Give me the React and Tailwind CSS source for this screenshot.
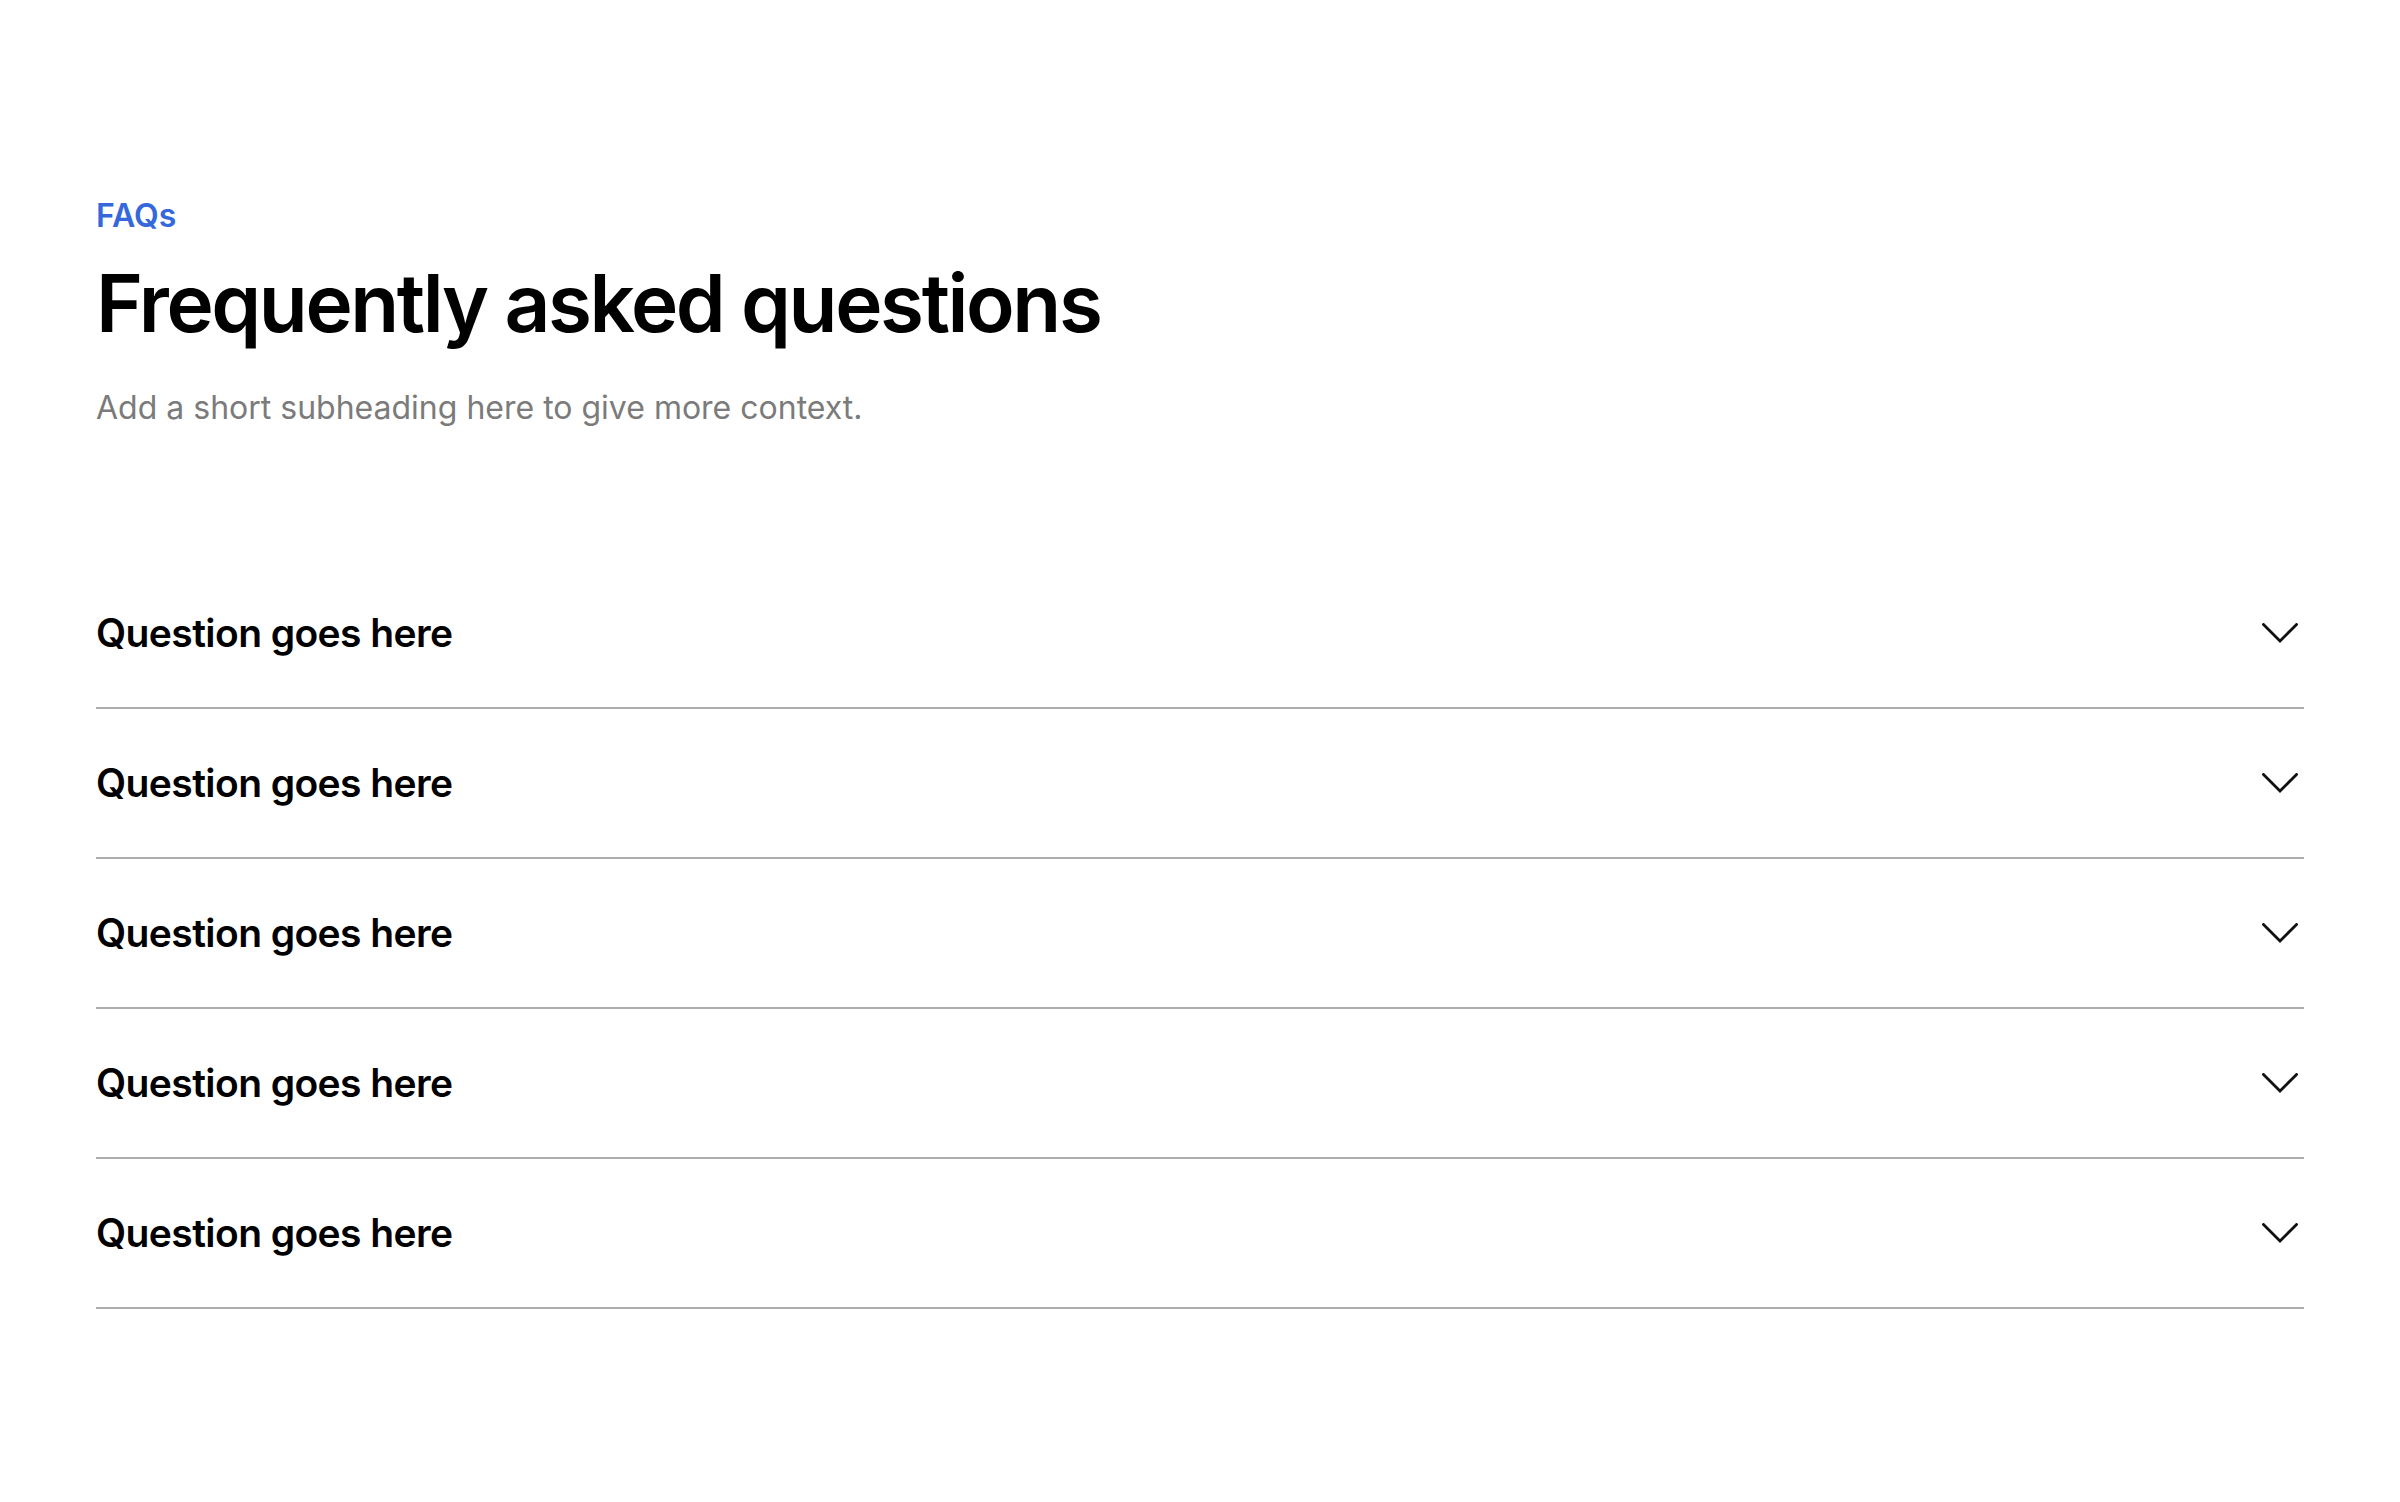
const questions = [
  "Question goes here",
  "Question goes here",
  "Question goes here",
  "Question goes here",
  "Question goes here",
];

function Chevron() {
  return (
    <svg width="36" height="21" viewBox="0 0 36 21" fill="none" className="shrink-0">
      <path d="M1.5 1.5 L18 18 L34.5 1.5" stroke="#111" strokeWidth="2.8" strokeLinecap="square" strokeLinejoin="miter" />
    </svg>
  );
}

export default function App() {
  return (
    <div className="min-h-[1502px] bg-white px-[96px] pt-[194px]" style={{ fontFamily: "Inter, 'Noto Sans', sans-serif" }}>
      <p className="text-[32px] leading-[44px] font-semibold text-[#3468db]">FAQs</p>
      <h1 className="mt-[17px] text-[80px] leading-[96px] font-semibold tracking-[-0.03em] text-black">
        Frequently asked questions
      </h1>
      <p className="mt-[35px] text-[32px] leading-[44px] text-[#7b7b7b]">
        Add a short subheading here to give more context.
      </p>

      <div className="mt-[129px]">
        {questions.map((q, i) => (
          <div key={i} className="flex h-[150px] items-center justify-between border-b-2 border-[#adadad] pr-[6px]">
            <span className="text-[39px] font-semibold tracking-[-0.015em] text-black">{q}</span>
            <Chevron />
          </div>
        ))}
      </div>
    </div>
  );
}
